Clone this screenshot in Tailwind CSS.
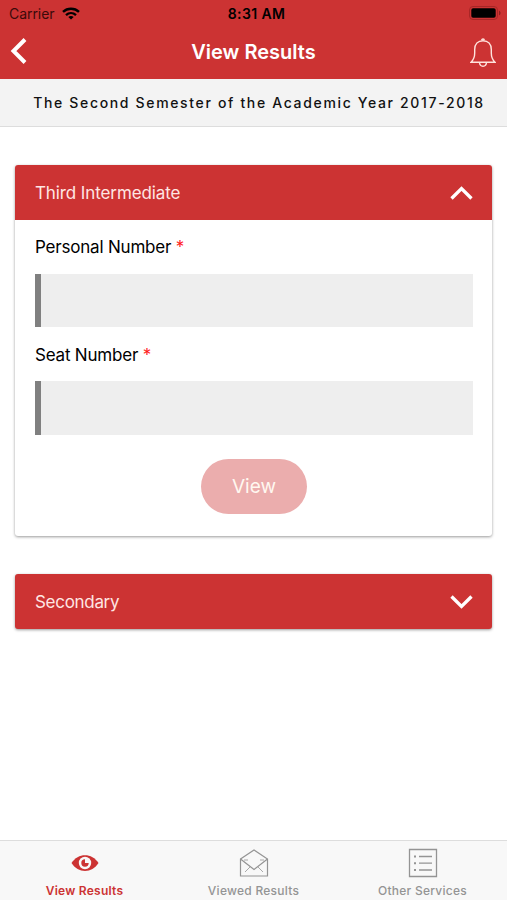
<!DOCTYPE html>
<html lang="en">
<head>
<meta charset="utf-8">
<meta name="viewport" content="width=device-width, initial-scale=1">
<title>View Results</title>
<script src="https://cdn.jsdelivr.net/npm/@tailwindcss/browser@4"></script>
</head>
<body class="bg-white font-['Inter',sans-serif] text-black">
<div class="flex h-[900px] w-[507px] flex-col overflow-hidden bg-white">
  <header class="h-[79px] shrink-0 bg-[#cc3333]">
    <div class="grid h-7 grid-cols-3 items-center pl-[9px] pr-1.5">
      <div class="flex items-center gap-[7px] text-[#3b0a0a]">
        <span class="text-[14px] leading-5 tracking-[-0.05px]">Carrier</span>
        <svg class="-mt-[2px] h-[13px] w-[18px] text-black" viewBox="0 0 18 13" fill="none" stroke="currentColor" stroke-width="2.4"><path d="M1 4.9C5.5.7 12.5.7 17 4.9M4 8.1c2.9-2.6 7.1-2.6 10 0"/><path d="M6.3 9.9c1.6-1.3 3.8-1.3 5.4 0L9 12.6z" fill="currentColor" stroke="none"/></svg>
      </div>
      <span class="pl-[3px] text-center text-[14px] leading-5 font-semibold tracking-[0.4px]">8:31 AM</span>
      <svg class="-mt-[2px] h-[14px] w-[32px] justify-self-end" viewBox="0 0 32 14"><rect x=".5" y=".5" width="28" height="13" rx="3.5" fill="none" stroke="#a82626"/><rect x="2.3" y="2.3" width="24.4" height="9.4" rx="1.8"/><path d="M30 4.7c2 .7 2 3.900 0 4.600z" fill="#8c2020"/></svg>
    </div>
    <div class="grid h-[48px] grid-cols-[40px_1fr_40px] items-center text-white">
      <svg class="-mt-[2px] ml-[10px] h-[26px] w-[17px]" viewBox="0 0 17 26" fill="none" stroke="currentColor" stroke-width="4"><path d="M15 1.500 3.500 13 15 24.500"/></svg>
      <h1 class="text-center text-[20px] leading-6 font-semibold">View Results</h1>
      <svg class="mt-[2px] ml-[3px] h-[30px] w-[26px]" viewBox="0 0 26 30" fill="none" stroke="#ffe3dd" stroke-width="1.400"><path d="M1 24.200c2.700-2.500 3.700-5 3.700-9.200v-3.500C4.700 6 8 2.700 13 2.700S21.300 6 21.300 11.500V15c0 4.200 1 6.700 3.700 9.200z"/><path d="M11.700 2.300c0-1.700 2.600-1.700 2.600 0M9.500 24.500c.4 5 6.600 5 7 0"/></svg>
    </div>
  </header>
  <div class="flex h-12 shrink-0 items-center justify-center border-b border-[#dddddd] bg-[#f3f3f3] pl-[11px]">
    <p class="text-[14px] leading-5 font-medium tracking-[1.660px] whitespace-nowrap text-[#111]">The Second Semester of the Academic Year 2017-2018</p>
  </div>
  <main class="flex-1 px-[15px] pt-[38px]">
    <section class="h-[371px] w-[477px] rounded-[3px] bg-white shadow-[0_1px_3px_rgba(0,0,0,0.400)]">
      <div class="flex h-[55px] items-center justify-between rounded-t-[3px] bg-[#cc3333] pr-[19px] pl-[20px] text-[#ffe6e3]">
        <h2 class="text-[17px] leading-6 tracking-[-0.100px]">Third Intermediate</h2>
        <svg class="h-[14px] w-[23px] text-white" viewBox="0 0 23 14" fill="none" stroke="currentColor" stroke-width="3.300"><path d="M1.500 12.500l10-10 10 10"/></svg>
      </div>
      <div class="px-[20px] pt-[15px]">
        <label class="block text-[17px] leading-6 tracking-[-0.200px]">Personal Number <span class="text-[#ff1a1a]">*</span></label>
        <div class="mt-[15px] h-[53px] w-[438px] border-l-[6px] border-[#808080] bg-[#eeeeee]"></div>
        <label class="mt-[16px] block text-[17px] leading-6 tracking-[-0.200px]">Seat Number <span class="text-[#ff1a1a]">*</span></label>
        <div class="mt-[14px] h-[54px] w-[438px] border-l-[6px] border-[#808080] bg-[#eeeeee]"></div>
        <button class="mt-[24px] ml-[166px] block h-[55px] w-[106px] rounded-full bg-[#ebadad] pt-[2px] text-[19px] text-[#fff8f0]">View</button>
      </div>
    </section>
    <section class="mt-[38px] flex h-[55px] w-[477px] items-center justify-between rounded-[3px] bg-[#cc3333] pr-[19px] pl-[20px] text-[#ffe6e3] shadow-[0_1px_3px_rgba(0,0,0,0.400)]">
      <h2 class="text-[17px] leading-6 tracking-[-0.300px]">Secondary</h2>
      <svg class="h-[14px] w-[23px] text-white" viewBox="0 0 23 14" fill="none" stroke="currentColor" stroke-width="3.300"><path d="M1.500 1.500l10 10 10-10"/></svg>
    </section>
  </main>
  <nav class="grid h-[60px] shrink-0 grid-cols-3 border-t border-[#dddddd] bg-[#f8f8f8] text-[12px] leading-4 font-medium tracking-[0.250px] text-[#949494]">
    <div class="flex flex-col items-center pt-[7px] font-semibold text-[#cc3333]">
      <svg class="h-[30px] w-[28px]" viewBox="0 0 28 30"><path d="M.5 15C7 4.500 21 4.500 27.500 15 21 25.500 7 25.500.5 15z" fill="#cc3333"/><circle cx="14" cy="15" r="6.200" fill="#f8f8f8"/><path d="M14 11.300V15h3.700A3.700 3.700 0 1 1 14 11.300z" fill="#cc3333"/></svg>
      <span class="mt-[5px]">View Results</span>
    </div>
    <div class="flex flex-col items-center pt-[7px]">
      <svg class="h-[30px] w-[30px]" viewBox="0 0 30 30" fill="none" stroke="#949494" stroke-width="1.200"><path d="M1.500 11 15 2l13.500 9v17h-27z"/><path d="M1.500 11 15 21.500 28.500 11"/><path d="M5 12h4M21 12h4M11 19l-5 5M19 19l5 5" stroke-width=".8"/></svg>
      <span class="mt-[5px]">Viewed Results</span>
    </div>
    <div class="flex flex-col items-center pt-[7px]">
      <svg class="h-[30px] w-[30px]" viewBox="0 0 30 30" fill="none" stroke="#949494" stroke-width="1.300"><path d="M1.500 1.500h27v27h-27zM11 8.500h13M11 15.200h13M11 22h13"/><path d="M6 8.500h2M6 15.200h2M6 22h2" stroke-width="2"/></svg>
      <span class="mt-[5px]">Other Services</span>
    </div>
  </nav>
</div>
</body>
</html>
